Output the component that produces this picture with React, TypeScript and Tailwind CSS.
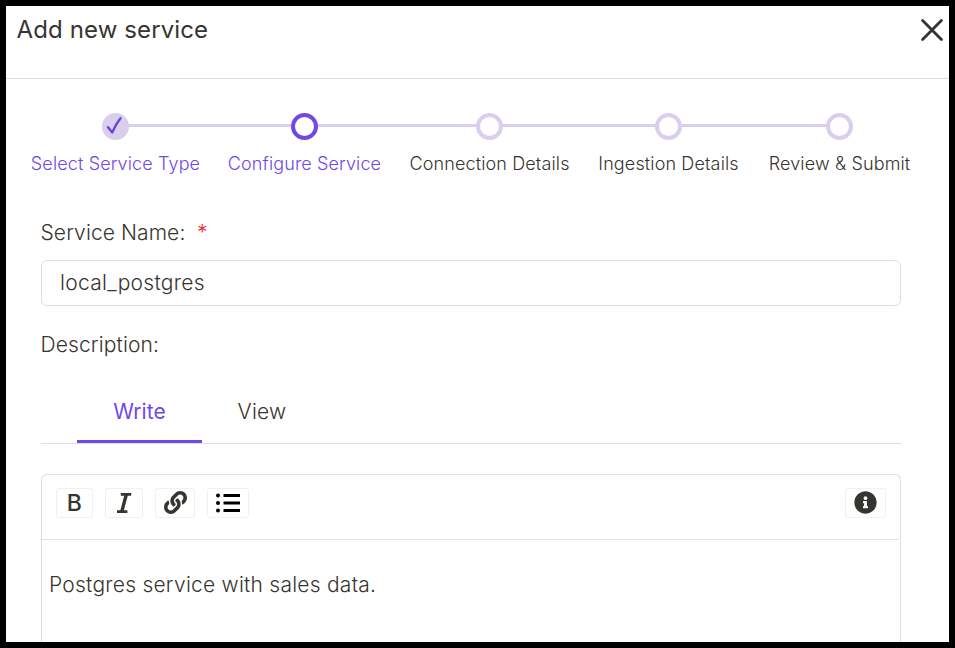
import { FaLink, FaInfoCircle } from "react-icons/fa";

type Status = "done" | "active" | "pending";

const steps: { label: string; status: Status; width: string }[] = [
  { label: "Select Service Type", status: "done", width: "w-[198px]" },
  { label: "Configure Service", status: "active", width: "w-[180px]" },
  { label: "Connection Details", status: "pending", width: "w-[190px]" },
  { label: "Ingestion Details", status: "pending", width: "w-[168px]" },
  { label: "Review & Submit", status: "pending", width: "w-[174px]" },
];

const dotStyle: Record<Status, string> = {
  done: "bg-[#d9ceee]",
  active: "border-4 border-[#7147e8]",
  pending: "border-4 border-[#d9ceee]",
};

function Stepper() {
  return (
    <div className="ml-[10.5px] flex pt-[34px]">
      {steps.map((s, i) => (
        <div key={s.label} className={`${s.width} flex shrink-0 flex-col`}>
          <div className="flex h-[27px] items-center">
            <div className={`mb-[2px] h-[3px] flex-1 ${i > 0 ? "bg-[#d9ceee]" : ""}`} />
            <div className={`flex size-[27px] items-center justify-center rounded-full ${dotStyle[s.status]}`}>
              {s.status === "done" && (
                <svg viewBox="0 0 27 27" className="size-[27px]" fill="none" stroke="#6a45d0" strokeWidth="2.4" strokeLinecap="round" strokeLinejoin="round">
                  <path d="M6 14.2L10.3 19.4C12.5 14 15 9.5 18.5 5.2" />
                </svg>
              )}
            </div>
            <div className={`mb-[2px] h-[3px] flex-1 ${i < steps.length - 1 ? "bg-[#d9ceee]" : ""}`} />
          </div>
          <div
            className={`mt-[10px] text-center text-[18px] leading-[27px] tracking-[0.13px] whitespace-nowrap ${
              s.status === "pending" ? "text-[#37352f]" : "text-[#7147e8]"
            }`}
          >
            {s.label}
          </div>
        </div>
      ))}
    </div>
  );
}

const toolButton = "flex h-[30px] items-center justify-center rounded-[3px] border border-[#f0f0f2]";

function Toolbar() {
  return (
    <div className="mr-px flex h-[65px] items-start border-b border-[#dde3ea] pt-[13px] pl-[14px] pr-[13px] text-[#37352f]">
      <div className={`${toolButton} w-[37px] text-[23px] font-medium`}>B</div>
      <div className={`${toolButton} ml-3 w-[38px]`}>
        <svg viewBox="0 0 16 20" className="h-5 w-4" fill="none" stroke="currentColor" strokeWidth="2.4">
          <path d="M4.8 1.4H15.2M1 18.6H11.4" strokeWidth="2.6" />
          <path d="M10.3 1.5L5.8 18.5" strokeWidth="3.4" />
        </svg>
      </div>
      <div className={`${toolButton} ml-3 w-[40px] pb-px`}>
        <FaLink size={23} />
      </div>
      <div className={`${toolButton} ml-3 w-[42px]`}>
        <svg viewBox="0 0 24 20" className="h-5 w-6 text-black" fill="currentColor">
          <circle cx="2" cy="2.5" r="2" />
          <circle cx="2" cy="10" r="2" />
          <circle cx="2" cy="17.5" r="2" />
          <path d="M7.5 1H24V4H7.5zM7.5 8.5H24V11.5H7.5zM7.5 16H24V19H7.5z" />
        </svg>
      </div>
      <div className={`${toolButton} ml-auto w-[41px] pb-[2px]`}>
        <FaInfoCircle size={23} />
      </div>
    </div>
  );
}

export default function App() {
  return (
    <div className="flex h-[648px] w-[955px] flex-col overflow-hidden border-6 border-black bg-white font-['Inter',sans-serif] font-light text-[#37352f]">
      <header className="flex h-[73px] shrink-0 items-start justify-between border-b border-[#dcdce0] pl-[10.5px] pr-[6px]">
        <h1 className="pt-[6px] text-[24px] leading-[36px] font-normal tracking-[0.12px]">Add new service</h1>
        <svg viewBox="0 0 22 22" className="mt-[13px] size-[22px]" fill="none" stroke="#333" strokeWidth="2.8" strokeLinecap="round">
          <path d="M1.6 1.6L20.4 20.4M20.4 1.6L1.6 20.4" />
        </svg>
      </header>
      <Stepper />
      <main className="flex min-h-0 flex-1 flex-col pl-[35px] pr-12 pt-[41px] text-[21px] leading-[30px] tracking-[0.24px]">
        <label className="-ml-[0.5px] flex tracking-[0.1px]">
          Service Name:<span className="ml-[11.5px] text-[#f5222d]">*</span>
        </label>
        <div className="mt-[12px] flex h-[46px] shrink-0 items-center rounded-[6px] border border-[#dcdfe4] pl-[18px] tracking-[0.3px]">local_postgres</div>
        <label className="-ml-[0.5px] mt-[24px] tracking-[0.12px]">Description:</label>
        <div className="mt-[30px] flex h-[54px] shrink-0 border-b border-[#dcdfe4] pl-9">
          <div className="flex h-[53px] w-[125px] justify-center border-b-3 border-[#7147e8] pt-[7px] font-normal tracking-[0.1px] text-[#7147e8]">Write</div>
          <div className="w-[120px] pt-[7px] text-center">View</div>
        </div>
        <div className="mt-[30px] flex min-h-0 flex-1 flex-col rounded-t-[6px] border border-b-0 border-[#dcdfe4]">
          <Toolbar />
          <p className="pt-[30px] pl-[7px]">Postgres service with sales data.</p>
        </div>
      </main>
    </div>
  );
}
